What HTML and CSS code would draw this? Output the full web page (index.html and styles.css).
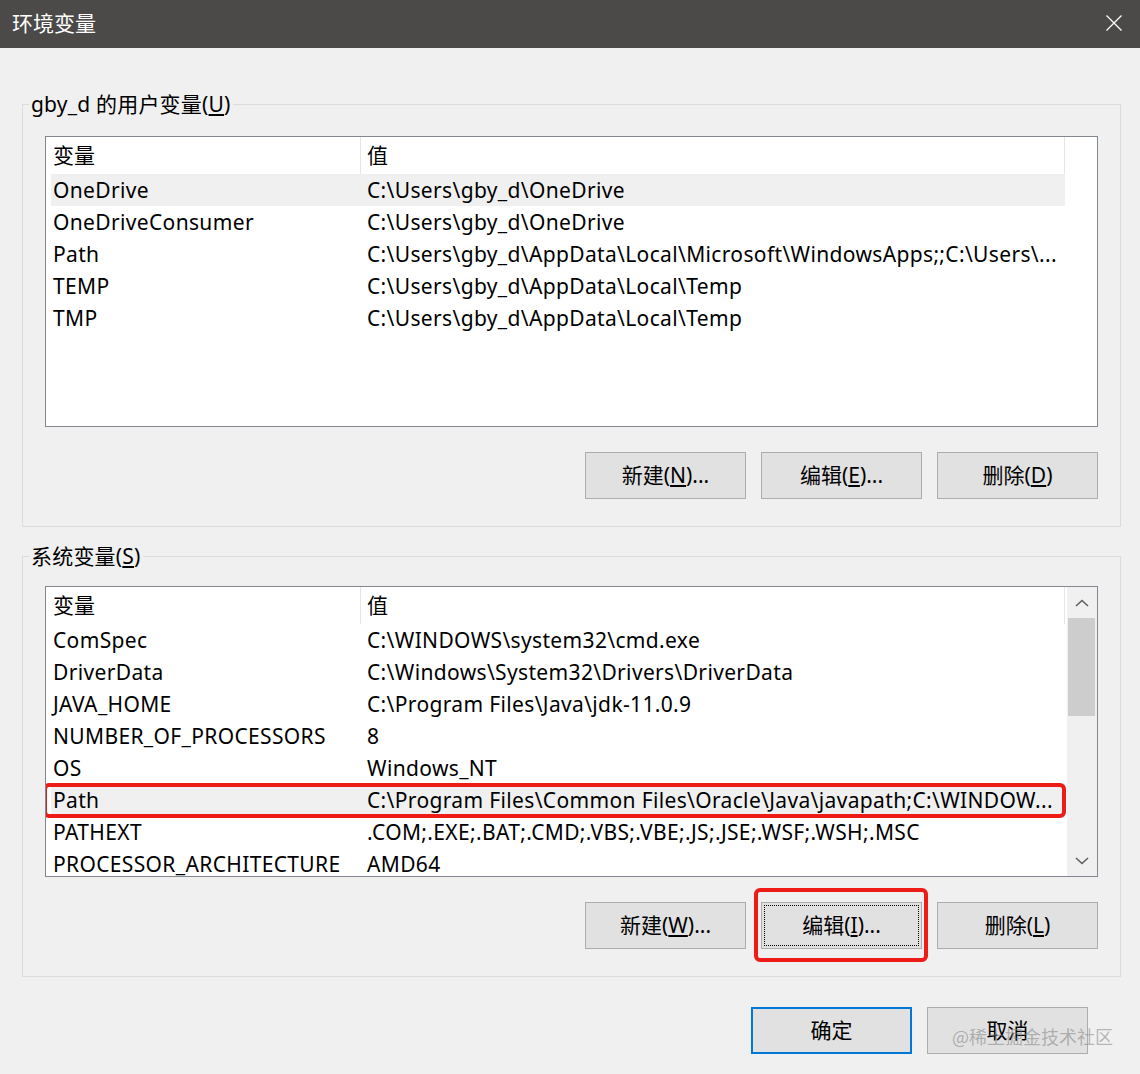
FILE: index.html
```html
<!DOCTYPE html>
<html lang="zh-CN">
<head>
    <meta charset="UTF-8">
    <title>环境变量</title>
    <link rel="stylesheet" href="styles.css">
</head>
<body>
<div class="window">
    <div class="titlebar">
        <span class="title">环境变量</span>
        <svg class="close" width="16" height="16" viewBox="0 0 16 16"><path d="M0.5 0.5L15.5 15.5M15.5 0.5L0.5 15.5" stroke="#fff" stroke-width="1.3" fill="none"/></svg>
    </div>

    <div class="content">
        <fieldset class="group user">
            <legend>gby_d 的用户变量(<u>U</u>)</legend>
            <div class="list">
                <div class="cols">
                    <div class="head"><div class="c1">变量</div><div class="c2">值</div></div>
                    <div class="row sel"><div class="c1">OneDrive</div><div class="c2">C:\Users\gby_d\OneDrive</div></div>
                    <div class="row"><div class="c1">OneDriveConsumer</div><div class="c2">C:\Users\gby_d\OneDrive</div></div>
                    <div class="row"><div class="c1">Path</div><div class="c2">C:\Users\gby_d\AppData\Local\Microsoft\WindowsApps;;C:\Users\...</div></div>
                    <div class="row"><div class="c1">TEMP</div><div class="c2">C:\Users\gby_d\AppData\Local\Temp</div></div>
                    <div class="row"><div class="c1">TMP</div><div class="c2">C:\Users\gby_d\AppData\Local\Temp</div></div>
                </div>
            </div>
            <div class="actions">
                <button class="btn">新建(<u>N</u>)...</button>
                <button class="btn">编辑(<u>E</u>)...</button>
                <button class="btn">删除(<u>D</u>)</button>
            </div>
        </fieldset>

        <fieldset class="group sys">
            <legend>系统变量(<u>S</u>)</legend>
            <div class="list">
                <div class="cols">
                    <div class="head"><div class="c1">变量</div><div class="c2">值</div></div>
                    <div class="row"><div class="c1">ComSpec</div><div class="c2">C:\WINDOWS\system32\cmd.exe</div></div>
                    <div class="row"><div class="c1">DriverData</div><div class="c2">C:\Windows\System32\Drivers\DriverData</div></div>
                    <div class="row"><div class="c1">JAVA_HOME</div><div class="c2">C:\Program Files\Java\jdk-11.0.9</div></div>
                    <div class="row"><div class="c1">NUMBER_OF_PROCESSORS</div><div class="c2">8</div></div>
                    <div class="row"><div class="c1">OS</div><div class="c2">Windows_NT</div></div>
                    <div class="row sel marked"><div class="c1">Path</div><div class="c2">C:\Program Files\Common Files\Oracle\Java\javapath;C:\WINDOW...</div></div>
                    <div class="row"><div class="c1">PATHEXT</div><div class="c2">.COM;.EXE;.BAT;.CMD;.VBS;.VBE;.JS;.JSE;.WSF;.WSH;.MSC</div></div>
                    <div class="row"><div class="c1">PROCESSOR_ARCHITECTURE</div><div class="c2">AMD64</div></div>
                </div>
                <div class="scroll">
                    <div class="arrow"><svg width="14" height="8" viewBox="0 0 14 8"><path d="M1 7L7 1.5L13 7" stroke="#606060" stroke-width="1.6" fill="none"/></svg></div>
                    <div class="thumb"></div>
                    <div class="track"></div>
                    <div class="arrow"><svg width="14" height="8" viewBox="0 0 14 8"><path d="M1 1L7 6.5L13 1" stroke="#606060" stroke-width="1.6" fill="none"/></svg></div>
                </div>
            </div>
            <div class="actions">
                <button class="btn">新建(<u>W</u>)...</button>
                <span class="marked-btn"><button class="btn focus">编辑(<u>I</u>)...</button></span>
                <button class="btn">删除(<u>L</u>)</button>
            </div>
        </fieldset>

        <div class="footer">
            <button class="btn default">确定</button>
            <button class="btn">取消</button>
        </div>
    </div>

    <div class="watermark">@稀土掘金技术社区</div>
</div>
</body>
</html>
```

FILE: styles.css
```css
*{box-sizing:border-box}
body{margin:0;background:#f0f0f0;font-family:"Noto Sans","Noto Sans CJK SC",sans-serif;font-size:21px;color:#000}
.window{position:relative;width:1140px;height:1074px;overflow:hidden}

.titlebar{height:48px;background:#4b4a48;display:flex;align-items:center;justify-content:space-between;padding:0 18px 2px 12px}
.title{color:#fff;font-size:21px;line-height:28px}

.content{padding:42px 19px 0 22px}
.group{margin:0;border:1px solid #dcdcdc;padding:18px 22px 27px 22px;min-width:0}
.group.sys{margin-top:15px;padding-top:16px}
.group legend{margin-left:-16px;padding:0 2px;line-height:28px;height:28px;letter-spacing:0.2px}

.list{position:relative;height:291px;border:1px solid #828790;background:#fff;display:flex;overflow:hidden}
.cols{width:1019px;flex:none}
.head{display:flex;height:37px;line-height:37px}
.head .c1{width:315px;padding-left:7px;border-right:1px solid #e5e5e5}
.head .c2{width:704px;padding-left:6px;border-right:1px solid #e5e5e5}
.row{position:relative;display:flex;height:32px;line-height:32px;margin-left:5px;white-space:nowrap;letter-spacing:0.35px}
.row .c1{width:310px;padding-left:2px;overflow:hidden}
.row .c2{flex:1;padding-left:6px;overflow:hidden}
.row.sel{background:#f0f0f0}
.row.marked::after{content:"";position:absolute;left:-8px;top:-1px;right:-1px;bottom:-2px;border:4px solid #ee1c17;border-radius:6px}

.scroll{width:30px;margin-left:auto;background:#f0f0f0;display:flex;flex-direction:column}
.arrow{height:31px;display:flex;align-items:center;justify-content:center}
.thumb{height:98px;margin:0 2px 0 1px;background:#cdcdcd}
.track{flex:1}

.actions{display:flex;justify-content:flex-end;gap:15px;margin-top:25px}
.btn{width:161px;height:47px;background:#e1e1e1;border:1px solid #adadad;font-family:inherit;font-size:21px;color:#000;padding:0 0 3px;margin:0}
.btn u{text-underline-offset:2px}
.marked-btn{position:relative;display:flex}
.marked-btn::after{content:"";position:absolute;left:-7px;right:-6px;top:-14px;bottom:-13px;border:4px solid #ee1c17;border-radius:6px}
.btn.focus{outline:1px dotted #000;outline-offset:-4px}

.footer{display:flex;justify-content:flex-end;gap:15px;margin-top:30px;padding-right:33px}
.btn.default{border:2px solid #0078d7}

.watermark{position:absolute;right:27px;bottom:25px;font-size:18px;line-height:26px;color:rgba(130,130,130,0.55);font-family:"Noto Sans CJK SC",sans-serif}
```
